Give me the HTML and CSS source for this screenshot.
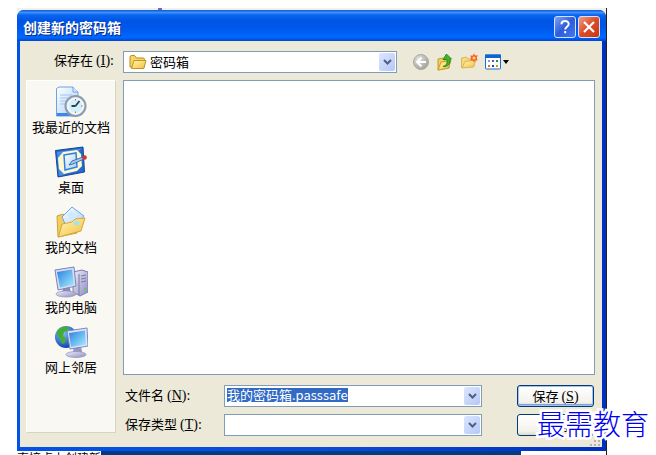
FILE: index.html
```html
<!DOCTYPE html>
<html lang="zh-CN">
<head>
    <meta charset="UTF-8">
    <meta name="viewport" content="width=device-width, initial-scale=1.0">
    <title>创建新的密码箱</title>
    <link rel="stylesheet" href="styles.css">
</head>
<body>
    <svg class="defs" width="0" height="0" aria-hidden="true">
        <defs>
            <linearGradient id="gold" x1="0" y1="0" x2="1" y2="1">
                <stop offset="0" stop-color="#fff6b5"/><stop offset="1" stop-color="#f2c040"/>
            </linearGradient>
            <linearGradient id="sky" x1="0" y1="0" x2="1" y2="1">
                <stop offset="0" stop-color="#2a7fe0"/><stop offset="1" stop-color="#a6f0ff"/>
            </linearGradient>
            <linearGradient id="paper" x1="0" y1="0" x2="1" y2="1">
                <stop offset="0" stop-color="#ffffff"/><stop offset="1" stop-color="#a9cffa"/>
            </linearGradient>
            <linearGradient id="metal" x1="0" y1="0" x2="1" y2="1">
                <stop offset="0" stop-color="#eeeefa"/><stop offset="1" stop-color="#8d8dc0"/>
            </linearGradient>
            <radialGradient id="globe" cx=".35" cy=".3" r=".75">
                <stop offset="0" stop-color="#7cc8ff"/><stop offset="1" stop-color="#0a3cae"/>
            </radialGradient>
            <radialGradient id="grey" cx=".35" cy=".3" r=".8">
                <stop offset="0" stop-color="#e2e2dc"/><stop offset="1" stop-color="#9c9c98"/>
            </radialGradient>
            <symbol id="arrow" viewBox="0 0 9 6">
                <path d="M1 1l3.500 3.500L8 1" fill="none" stroke="#4d6185" stroke-width="2"/>
            </symbol>
        </defs>
    </svg>

    <div class="page">
        <i class="mark"></i>
        <div class="dialog" role="dialog" aria-labelledby="title">
            <div class="titlebar">
                <h1 id="title">创建新的密码箱</h1>
                <button class="caption help" aria-label="帮助">
                    <svg width="20" height="20" viewBox="0 0 20 20"><path d="M6.500 7.200c0-4.200 7.200-4.200 7.200-.2 0 2.600-3.500 2.800-3.500 5.500M10.200 14v2.300" fill="none" stroke="#fff" stroke-width="2"/></svg>
                </button>
                <button class="caption close" aria-label="关闭">
                    <svg width="20" height="20" viewBox="0 0 20 20"><path d="M5 5l10 10M15 5L5 15" stroke="#fff" stroke-width="2.200"/></svg>
                </button>
            </div>

            <div class="content">
                <div class="toolbar">
                    <label for="folder">保存在<span class="key">(<u>I</u>):</span></label>
                    <div class="combo">
                        <svg class="folder" width="18" height="16" viewBox="0 0 18 16">
                            <path d="M1 13V3q0-1.500 1.500-1.500h3L7.500 4H14q1.500 0 1.500 1.500V13z" fill="#f6d566" stroke="#b98b1a"/>
                            <path d="M2.500 14.500L5 6.500h12l-2.200 8z" fill="url(#gold)" stroke="#c3941f"/>
                        </svg>
                        <select id="folder"><option>密码箱</option></select>
                        <span class="drop"><svg width="9" height="6"><use href="#arrow"/></svg></span>
                    </div>
                    <div class="tools">
                        <button aria-label="后退">
                            <svg width="18" height="18" viewBox="0 0 18 18">
                                <circle cx="9" cy="9" r="7.500" fill="url(#grey)" stroke="#a9a9a2"/>
                                <path d="M9.500 4.500L5 9l4.500 4.500M5.500 9H14" fill="none" stroke="#fff" stroke-width="2"/>
                            </svg>
                        </button>
                        <button aria-label="向上一级">
                            <svg width="18" height="18" viewBox="0 0 18 18">
                                <path d="M2 6l5-1 1 2 6-1-1 9-11 2z" fill="#f3cf55" stroke="#c29a2c"/>
                                <path d="M2 17l3-8 10-1.500L12.500 15z" fill="url(#gold)" stroke="#c99d2b"/>
                                <path d="M7 13.500c4-1 4.500-4 3.800-7H7L10.500 1l5 5H14c.5 5-2 8-7 7.500z" fill="#3fb52c" stroke="#187a18" stroke-width=".8"/>
                            </svg>
                        </button>
                        <button aria-label="新建文件夹">
                            <svg width="18" height="18" viewBox="0 0 18 18">
                                <path d="M1.500 14.500V5l5-1L8 6l6-.5v8z" fill="#f6d978" stroke="#dab860"/>
                                <path d="M2 15l3-6.500L16 7l-2.500 7z" fill="url(#gold)" stroke="#dbb45c"/>
                                <path d="M14 .5l1.200 2 2.500-.3-1 2.800 1 2.500-2.500-.3-1.200 2.300-1.500-2.300-2.300.3.900-2.500-.9-2.500 2.400.2z" fill="#f4602f"/>
                                <circle cx="14" cy="5" r="1.500" fill="#ffd27a"/>
                            </svg>
                        </button>
                        <button class="views" aria-label="查看">
                            <svg width="24" height="18" viewBox="0 0 24 18">
                                <rect x=".5" y="2" width="15" height="14" rx="1" fill="#fff" stroke="#1870d0"/>
                                <path d="M0 1.500h16V5H0z" fill="#0d65d0"/>
                                <path d="M3 7h2v2H3z" fill="#8a97cc"/><path d="M7 7h2v2H7z" fill="#4c64c0"/><path d="M11 7h2v2h-2z" fill="#24934a"/>
                                <path d="M3 12h2v2H3z" fill="#e26b3d"/><path d="M7 12h2v2H7z" fill="#174fae"/><path d="M11 12h2v2h-2z" fill="#c79b16"/>
                                <path d="M18 7h6l-3 4z" fill="#000"/>
                            </svg>
                        </button>
                    </div>
                </div>

                <div class="main">
                    <nav class="places">
                        <a href="#recent">
                            <svg width="34" height="32" viewBox="0 0 34 32">
                                <path d="M2.500 2.500L5 1h14l5 5v24H2.500z" fill="url(#paper)" stroke="#6fa2e2"/>
                                <path d="M19 1v5h5" fill="#dcecff" stroke="#6fa2e2"/>
                                <path d="M6 9h12M6 12h10M6 15h7M6 18h5" stroke="#a3c5f2"/>
                                <path d="M3 27h20v3H3z" fill="#3c87e8"/>
                                <circle cx="21.500" cy="20" r="10" fill="#e4eef5" stroke="#8d9cad" stroke-width="2"/>
                                <circle cx="21.500" cy="20" r="7.500" fill="#d3f0fa" stroke="#fff"/>
                                <path d="M21.500 20l4-5M21.500 20h-4" fill="none" stroke="#293c57" stroke-width="1.800"/>
                                <path d="M21 13h1v1.500h-1zM21 25.500h1V27h-1zM27 19.500h1.500v1H27z" fill="#e5582d"/>
                            </svg>
                            我最近的文档
                        </a>
                        <a href="#desktop">
                            <svg width="34" height="32" viewBox="0 0 34 32">
                                <path d="M1.500 4.500L29 1l1.500 25L4 31z" fill="#236bcb" stroke="#12479c"/>
                                <path d="M3 6L27 2.500 10 29l-5 1z" fill="#64a5ed" opacity=".6"/>
                                <path d="M9 6l14-2 4 4 1 12-5 5-13 3-5-5-1-11z" fill="#fff7cf"/>
                                <path d="M10 9l12-2 1 14-12 3z" fill="url(#paper)" stroke="#2f82dc" stroke-width="1.500"/>
                                <path d="M15 19l3-4 11-4 1 2-11 5z" fill="#9dcaf4" stroke="#285896" stroke-width=".8"/>
                                <circle cx="30.500" cy="11.500" r="2.300" fill="#d6302a"/>
                            </svg>
                            桌面
                        </a>
                        <a href="#documents">
                            <svg width="34" height="32" viewBox="0 0 34 32">
                                <path d="M3 10l6-2 4 4 15-2-5 17-19 4z" fill="#f3cd5f" stroke="#d0a23c"/>
                                <path d="M8 11L18 1l12 9-9 12-9-2z" fill="url(#paper)" stroke="#6aa6df"/>
                                <path d="M13 9l4-4 6 5-4 5z" fill="#cfeaff"/>
                                <path d="M4.500 31L8 18l10-2 3-3 10-1-4 13z" fill="url(#gold)" stroke="#d8a63a"/>
                                <path d="M19 18l3-4 4 3-3 3z" fill="#9fe2f4"/>
                            </svg>
                            我的文档
                        </a>
                        <a href="#computer">
                            <svg width="34" height="32" viewBox="0 0 34 32">
                                <path d="M19 6l9-2 6 2v20l-8 4-7-4z" fill="url(#metal)" stroke="#7c7cb4"/>
                                <path d="M25 8v21M27 10l5-1M27 13l5-1M27 16l5-1" stroke="#7777ab"/>
                                <path d="M30 22h2v2h-2z" fill="#6ac843"/>
                                <path d="M9 22h7l1 5H8z" fill="#8b8bb9"/>
                                <ellipse cx="12" cy="28" rx="10" ry="3" fill="url(#metal)" stroke="#9292bb" stroke-width=".7"/>
                                <path d="M1 4l19-3 2 19-18 4z" fill="#d9dcf1" stroke="#7b83bd"/>
                                <path d="M3 6l15-2.500 2 15L6 21.500z" fill="url(#sky)"/>
                            </svg>
                            我的电脑
                        </a>
                        <a href="#network">
                            <svg width="34" height="32" viewBox="0 0 34 32">
                                <circle cx="12" cy="11" r="11" fill="url(#globe)"/>
                                <path d="M3 5q5-6 12-4l-1 4-4 1-1 4 3 3-1 4-3 1-2-5-3-4z" fill="#47ac36"/>
                                <path d="M20 20h7l1 6h-9z" fill="#9696bf"/>
                                <ellipse cx="22" cy="28.500" rx="10" ry="3" fill="url(#metal)" stroke="#8c8cba" stroke-width=".7"/>
                                <path d="M13 5l20-3 1 18-18 3z" fill="#dfe4f8" stroke="#7c88c2"/>
                                <path d="M15 7l16-2.500 1 14-15 2.500z" fill="url(#sky)"/>
                            </svg>
                            网上邻居
                        </a>
                    </nav>

                    <form class="save">
                        <div class="files"></div>
                        <div class="fields">
                            <label for="filename">文件名<span class="key">(<u>N</u>):</span></label>
                            <div class="combo">
                                <input class="filename" id="filename" type="text" size="16" value="我的密码箱.passsafe">
                                <button class="drop" type="button" aria-label="文件名列表"><svg width="9" height="6"><use href="#arrow"/></svg></button>
                            </div>
                            <button class="button default" type="submit">保存<span class="key">(<u>S</u>)</span></button>

                            <label for="filetype">保存类型<span class="key">(<u>T</u>):</span></label>
                            <div class="combo">
                                <select id="filetype"><option></option></select>
                                <span class="drop"><svg width="9" height="6"><use href="#arrow"/></svg></span>
                            </div>
                            <button class="button" type="button">取消</button>
                        </div>
                    </form>
                </div>
            </div>

            <svg class="grip" width="12" height="12" viewBox="0 0 12 12" aria-hidden="true">
                <path d="M9 1h2v2H9zM5 5h2v2H5zM9 5h2v2H9zM1 9h2v2H1zM5 9h2v2H5zM9 9h2v2H9z" fill="#b8b4a2"/>
            </svg>
            <div class="watermark">最需教育</div>
        </div>
        <div class="behind">
            <span>直接点上创建新</span>
            <div class="bar"></div>
        </div>
    </div>
</body>
</html>
```

FILE: styles.css
```css
* {
    box-sizing: border-box;
}

body {
    margin: 0;
    background: #fff;
    color: #000;
    font: 13px/18px "Noto Sans CJK SC", sans-serif;
    overflow: hidden;
}

button, input, select {
    font: inherit;
    color: inherit;
    margin: 0;
    padding: 0;
    border: 0;
    background: none;
}

svg {
    display: block;
    flex: none;
}

.defs {
    position: absolute;
}

.page {
    position: relative;
    display: flex;
    flex-direction: column;
    height: calc(100vh - 8px);
    margin: 8px 49px 0 17px;
    padding-top: 2px;
    border-right: 1px solid #222;
    background: linear-gradient(#f1f1ef 12px, #fff 12px);
}

.mark {
    position: absolute;
    top: 0;
    left: 141px;
    width: 4px;
    height: 2px;
    background: #6868d0;
}

/* dialog frame */
.dialog {
    position: relative;
    flex: 1;
    display: flex;
    flex-direction: column;
    border-radius: 7px 7px 0 0;
    background: linear-gradient(90deg, #0052e8 2px, #0a4cdc 50%, #0030c0);
}

.titlebar {
    display: flex;
    align-items: center;
    gap: 2px;
    height: 31px;
    padding: 3px 6px 0;
    border-radius: 7px 7px 0 0;
    background: linear-gradient(#1553d0, #3a90ff 8%, #0866f0 16%, #0054e3 35%, #0058ec 60%, #0068ff 88%, #0046cf);
}

.titlebar h1 {
    flex: 1;
    margin: 0;
    color: #fff;
    font-size: 14px;
    font-weight: bold;
    text-shadow: 1px 1px #0a2b86;
}

.caption {
    width: 22px;
    height: 22px;
    border: 1px solid #d5e2fb;
    border-radius: 3px;
}

.help {
    background: linear-gradient(135deg, #7ea3f5, #2c5ddd 50%, #3f78f4);
}

.close {
    background: linear-gradient(135deg, #f09d83, #dc4b28 50%, #c53811);
}

.content {
    flex: 1;
    display: flex;
    flex-direction: column;
    gap: 7px;
    margin: 0 4px 4px 3px;
    padding: 9px 7px 11px 6px;
    background: #ece9d8;
}

/* look-in row */
.toolbar {
    display: grid;
    grid-template-columns: 90px 274px 1fr;
    column-gap: 7px;
    align-items: center;
    height: 23px;
}

.toolbar label {
    padding-right: 2px;
    text-align: right;
}

label {
    padding-bottom: 2px;
}

.key {
    margin-left: 3px;
    font: 14px/18px "Liberation Serif", serif;
}

.tools {
    display: flex;
    gap: 6px;
    padding-left: 8px;
}

.tools .views {
    margin-left: 1px;
}

.combo {
    display: flex;
    align-items: center;
    min-width: 0;
    height: 22px;
    padding: 1px;
    border: 1px solid #7f9db9;
    background: #fff;
}

.combo .folder {
    margin-left: 4px;
}

.combo select {
    flex: 1;
    min-width: 0;
    padding-left: 3px;
    appearance: none;
    outline: none;
}

.drop {
    display: flex;
    flex: none;
    align-items: center;
    justify-content: center;
    width: 16px;
    height: 18px;
    margin-left: auto;
    border-radius: 2px;
    background: linear-gradient(135deg, #dce6fe, #b4c8f6);
    pointer-events: none;
}

/* places bar and file pane */
.main {
    flex: 1;
    display: grid;
    grid-template-columns: 90px 1fr;
    column-gap: 7px;
}

.places {
    display: flex;
    flex-direction: column;
    gap: 10px;
    margin-bottom: 3px;
    padding-top: 5px;
    border: 1px solid #fff;
    border-right-color: #d8d4c2;
    border-bottom-color: #d8d4c2;
    background: #f9f8f3;
}

.places a {
    display: flex;
    flex-direction: column;
    align-items: center;
    color: #000;
    text-decoration: none;
}

.save {
    display: flex;
    flex-direction: column;
    gap: 10px;
}

.files {
    flex: 1;
    border: 1px solid #7f9db9;
    background: #fff;
}

.fields {
    display: grid;
    grid-template-columns: 99px 1fr 77px;
    row-gap: 7px;
    align-items: center;
    padding: 0 1px 0 2px;
}

.fields .combo {
    margin-right: 35px;
}

.filename {
    field-sizing: content;
    height: 14px;
    line-height: 14px;
    margin: 0 0 2px 1px;
    background: #316ac5;
    color: #fff;
    outline: none;
}

.button {
    height: 22px;
    border: 1px solid #003c74;
    border-radius: 3px;
    background: linear-gradient(#fff, #f3f2ec 80%, #dcd8cb);
}

.button.default {
    box-shadow: inset 0 0 0 1px #a5c0f2, inset 0 -2px #7c9fe0;
}

.grip {
    position: absolute;
    right: 5px;
    bottom: 4px;
}

.watermark {
    position: absolute;
    right: -43px;
    bottom: 8px;
    color: #0000f0;
    font-size: 28px;
    font-weight: 300;
    line-height: 40px;
    -webkit-text-stroke: 5px #fff;
    paint-order: stroke fill;
    white-space: nowrap;
}

/* sliver of the window underneath */
.behind {
    display: flex;
    height: 4px;
    overflow: hidden;
}

.behind span {
    width: 84px;
    font-size: 12px;
    line-height: 14px;
    white-space: nowrap;
}

.bar {
    flex: 1;
    margin-right: 85px;
    background: #003c80;
}
```
